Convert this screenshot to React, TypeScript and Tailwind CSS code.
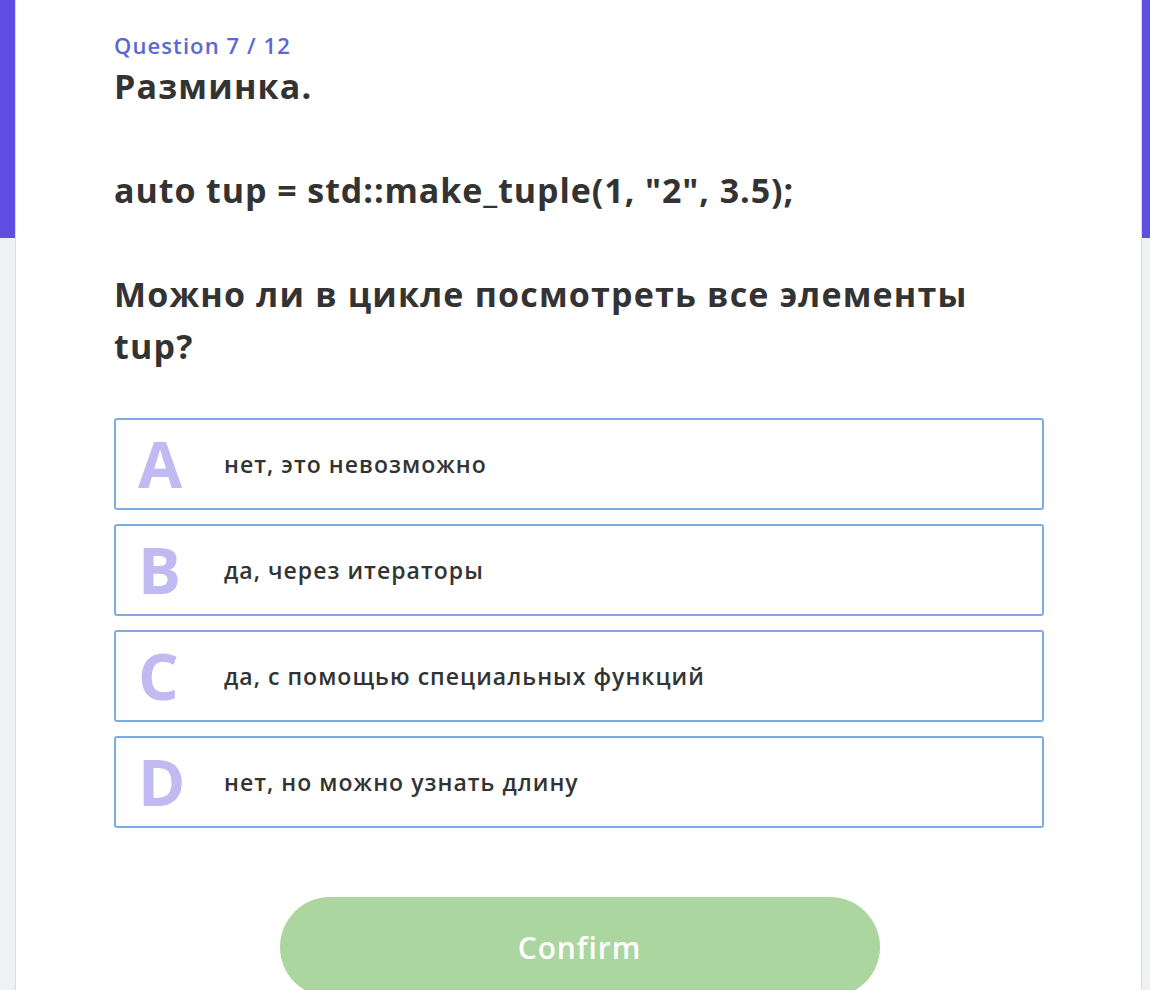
const OPTIONS = [
  { letter: "A", text: "нет, это невозможно" },
  { letter: "B", text: "да, через итераторы" },
  { letter: "C", text: "да, с помощью специальных функций" },
  { letter: "D", text: "нет, но можно узнать длину" },
];

export default function App() {
  return (
    <div
      className="relative min-h-[990px] h-[990px] overflow-hidden bg-[#f0f1f4]"
      style={{ fontFamily: '"Open Sans", "Noto Sans", sans-serif' }}
    >
      <div className="h-[238px] bg-[#5f4ee2]" />
      <div className="absolute left-[15px] right-[8px] top-0 bottom-0 border-x border-[#dcdce2] bg-white">
        <div className="pl-[98px] pr-[96px] pt-[30px]">
          <div className="text-[22px] font-semibold leading-[30px] tracking-[0.05em] text-[#5b67d2]">
            Question 7 / 12
          </div>
          <div className="text-[34px] font-bold leading-[52px] tracking-[0.035em] text-[#333333]">
            <p>Разминка.</p>
            <p>&nbsp;</p>
            <p className="tracking-[0.027em]">auto tup = std::make_tuple(1, "2", 3.5);</p>
            <p>&nbsp;</p>
            <p>
              Можно ли в цикле посмотреть все элементы
              <br />
              tup?
            </p>
          </div>
          <div className="mt-[46px] flex flex-col gap-[14px]">
            {OPTIONS.map((o) => (
              <button
                key={o.letter}
                type="button"
                className="flex h-[92px] w-[930px] items-center rounded-[3px] border-2 border-[#80ace6] bg-white text-left"
              >
                <span className="w-[108px] pl-[22px] text-[64px] font-bold leading-none text-[#c1b9f1]">
                  {o.letter}
                </span>
                <span className="text-[23px] font-semibold tracking-[0.045em] text-[#333333]">
                  {o.text}
                </span>
              </button>
            ))}
          </div>
          <div className="mt-[69px] flex justify-center">
            <button
              type="button"
              className="h-[100px] w-[600px] rounded-full bg-[#abd69f] text-[30px] font-semibold tracking-[0.03em] text-white"
            >
              Confirm
            </button>
          </div>
        </div>
      </div>
    </div>
  );
}
